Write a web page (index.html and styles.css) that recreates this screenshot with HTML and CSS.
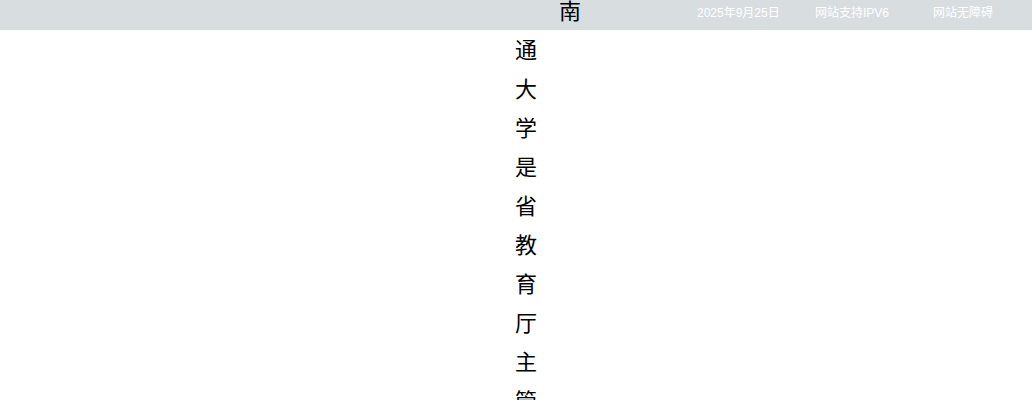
FILE: index.html
```html
<!DOCTYPE html>
<html lang="zh-CN">
<head>
<meta charset="utf-8">
<title>南通大学</title>
<link rel="stylesheet" href="styles.css">
</head>
<body>
<div class="topbar">
  <ul class="links">
    <li>2025年9月25日</li>
    <li>网站支持IPV6</li>
    <li>网站无障碍</li>
  </ul>
</div>
<div class="notice">南通大学是省教育厅主管、江苏省人民政府与南通市人民政府共建的综合性大学。</div>
</body>
</html>
```
FILE: styles.css
```css
html, body {
  margin: 0;
  padding: 0;
  background: #fff;
}
body {
  font-family: "Liberation Sans", "Noto Sans CJK SC", sans-serif;
}
.topbar {
  height: 30px;
  background: #d8dee0;
  display: flex;
  padding-left: 697px;
}
.links {
  list-style: none;
  margin: 0;
  padding: 0;
  display: flex;
}
.links li {
  width: 118px;
  flex: none;
  font-size: 12px;
  line-height: 26px;
  color: #fff;
  white-space: nowrap;
}
.notice {
  width: 22px;
  margin: -40px 0 0 calc(50% - 1px);
  font-family: "Noto Sans CJK SC", sans-serif;
  font-size: 22px;
  line-height: 39px;
  text-indent: 44px;
  color: #000;
  word-break: break-all;
}
```
